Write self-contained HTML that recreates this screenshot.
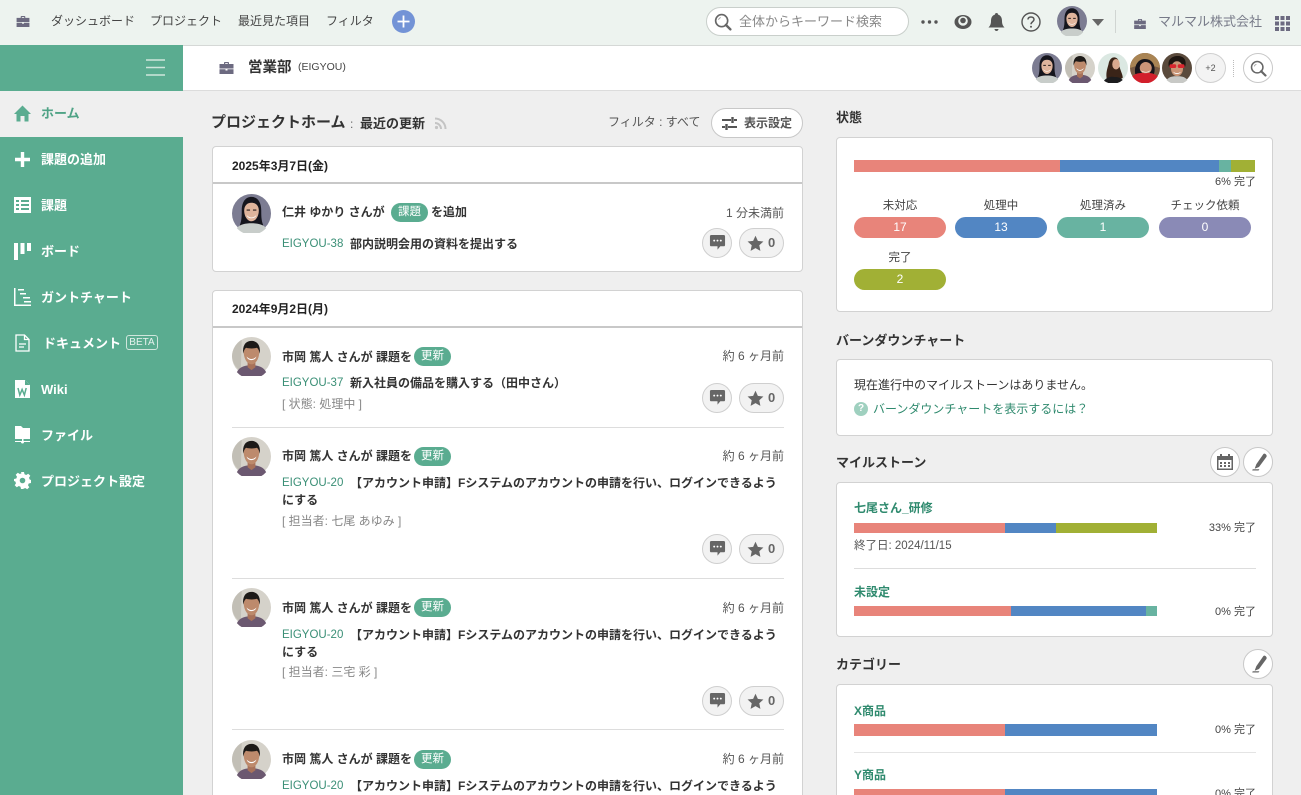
<!DOCTYPE html>
<html lang="ja"><head><meta charset="utf-8"><title>営業部</title>
<style>
html,body{margin:0;padding:0;width:1301px;height:795px;overflow:hidden}
body{background:#efefef;font-family:"Liberation Sans","Noto Sans CJK JP",sans-serif;color:#333;font-size:12px}
#root{position:relative;width:1301px;height:795px;overflow:hidden;background:#efefef}
.t{position:absolute;white-space:nowrap;line-height:20px;height:20px}
.r{position:absolute}
.b{font-weight:bold}
svg{position:absolute;overflow:visible}
.n{color:#fff;font-weight:bold;font-size:13px;left:41px}
.panel{position:absolute;background:#fff;border:1px solid #d2d2d2;border-radius:4px;box-sizing:border-box}
.pill{position:absolute;height:21px;line-height:21px;border-radius:11px;width:92px;color:#fff;text-align:center;font-size:12px}
.lab{position:absolute;width:92px;text-align:center;line-height:20px;font-size:11.5px;white-space:nowrap;color:#444}
.seg{position:absolute}
.tag{position:absolute;background:#5aac90;color:#fff;border-radius:10px;height:19px;line-height:19px;width:37px;text-align:center;font-size:11.5px}
.id{color:#3a8f76;font-size:11.5px}
.grey{color:#888}
.rbtn{position:absolute;background:#f2f2f2;border:1px solid #cfcfcf;border-radius:15px;box-sizing:border-box;height:30px}
.cbtn{position:absolute;background:#fff;border:1px solid #c8c8c8;border-radius:50%;width:30px;height:30px;box-sizing:border-box}
.hd{font-size:13px;font-weight:bold;color:#333}
.ms{color:#2f8a6e;font-weight:bold;font-size:12px}
.pc{font-size:11px;color:#444}
</style></head><body><div id="root">
<svg width="0" height="0" style="position:absolute">
<defs>
<symbol id="a1" viewBox="0 0 40 40"><circle cx="20" cy="20" r="20" fill="#7c7c92"/><path d="M8 32c2-5 2-10 2-15C10 8 14 3 20 3s10 5 10 14c0 5 0 10 2 15l-6 3H14z" fill="#15151d"/><path d="M12.500 17c0-5 3-8 7.500-8s7.500 3 7.500 8c0 6-3.500 11-7.500 11s-7.500-5-7.500-11z" fill="#dfb49c"/><path d="M15 21.500c3 3.500 7 3.500 10 0-1 4.500-9 4.500-10 0z" fill="#fff"/><path d="M15 16.500h3.500M21.500 16.500H25" stroke="#2a1f1c" stroke-width="1.200"/><path d="M5 35c3-4 9-5 15-5s12 1 15 5a20 20 0 0 1-30 0z" fill="#c8cdca"/></symbol>
<symbol id="a2" viewBox="0 0 40 40"><circle cx="20" cy="20" r="20" fill="#d5d2ca"/><path d="M0 20a20 20 0 0 1 10-17l-1 32A20 20 0 0 1 0 20z" fill="#c2bfb6"/><path d="M5 36c3-6 9-7 15-7s12 1 15 7a20 20 0 0 1-30 0z" fill="#6b5870"/><path d="M16 26h8v5l-4 3-4-3z" fill="#a8725a"/><path d="M12 15c0-5 3-8 8-8s8 3 8 8c0 7-3.500 13-8 13s-8-6-8-13z" fill="#bd8a6c"/><path d="M11.500 17c-1-9 3-13 8.500-13s9.500 4 8.500 13c-.6-3-1.500-5-3-6-3.500 1-7.500 1-11 0-1.500 1-2.400 3-3 6z" fill="#1d1a18"/><path d="M15 20c3 3.500 7 3.500 10 0-1 5-9 5-10 0z" fill="#fff"/></symbol>
<symbol id="a3" viewBox="0 0 40 40"><circle cx="20" cy="20" r="20" fill="#dbe8e2"/><path d="M12 36c-2-8 0-14 2-21 1-7 5-10 9-9 4 1 5 5 5 9 1 7 5 13 5 18l-9 6z" fill="#3a2418"/><ellipse cx="24" cy="15" rx="5" ry="7" fill="#d9a98e"/><path d="M8 37c4-5 10-6 14-5 5 0 8 1 11 4a20 20 0 0 1-25 1z" fill="#1c1c1e"/></symbol>
<symbol id="a4" viewBox="0 0 40 40"><circle cx="20" cy="20" r="20" fill="#7a5c44"/><path d="M0 20a20 20 0 0 1 40 0l-6-2H6z" fill="#a98454"/><path d="M7 28C5 18 10 8 20 8s15 9 12 20z" fill="#17141a"/><ellipse cx="21" cy="20" rx="8" ry="8" fill="#cc9478"/><path d="M15 23c3 3 9 3 12 0-1 4-11 4-12 0z" fill="#fff"/><path d="M3 31c5-4 10-5 17-4 7-1 12 0 17 4a20 20 0 0 1-34 0z" fill="#d21f2b"/></symbol>
<symbol id="a5" viewBox="0 0 40 40"><circle cx="20" cy="20" r="20" fill="#5a4a3c"/><path d="M9 18c-2-9 4-14 12-14s12 5 10 14z" fill="#1e1611"/><ellipse cx="20" cy="21" rx="8" ry="10" fill="#c99576"/><rect x="10" y="15" width="9" height="5" rx="2" fill="#d8262e"/><rect x="21" y="15" width="9" height="5" rx="2" fill="#d8262e"/><path d="M15 25c3 2.500 7 2.500 10 0-1 4-9 4-10 0z" fill="#fff"/><path d="M6 36c4-5 9-5 14-5s10 0 14 5a20 20 0 0 1-28 0z" fill="#c8c9c6"/></symbol>
<symbol id="case" viewBox="0 0 14 12"><path d="M4.500 2V.8C4.500.4 4.900 0 5.300 0h3.400c.4 0 .8.400.8.800V2H14v4.500H0V2zM5.700 1.100V2h2.600v-.9zM0 7.300h6v1.200h2V7.300h6V12H0z" fill="currentColor"/></symbol>
<symbol id="cmt" viewBox="0 0 18 18"><path d="M2.500 1h13A1.500 1.500 0 0 1 17 2.500v9a1.500 1.500 0 0 1-1.500 1.500H12l-3 3.500V13H2.500A1.500 1.500 0 0 1 1 11.500v-9A1.500 1.500 0 0 1 2.500 1z" fill="#666"/><circle cx="5.500" cy="7" r="1" fill="#fff"/><circle cx="9" cy="7" r="1" fill="#fff"/><circle cx="12.500" cy="7" r="1" fill="#fff"/></symbol>
<symbol id="star" viewBox="0 0 18 18"><path d="M9 .8l2.500 5.400 5.900.7-4.400 4 1.200 5.900L9 13.900l-5.200 2.900L5 10.900l-4.400-4 5.900-.7z" fill="#666"/></symbol>
<symbol id="pen" viewBox="0 0 20 20"><path d="M15 1c1-.6 2-.2 2.800.6.800.8 1 1.900.4 2.800L10 15.500l-4.500 1.800-.2-.2L7 12.500zM3 18h7.500l-1 1.500H2.500z" fill="#666"/></symbol>
<symbol id="mag" viewBox="0 0 20 20"><circle cx="8.500" cy="8.500" r="6.700" fill="none" stroke="#666" stroke-width="1.800"/><path d="M13.200 13.200l5 5" stroke="#666" stroke-width="2.600" stroke-linecap="round"/><path d="M5 7.500A4 4 0 0 1 7.500 5" fill="none" stroke="#999" stroke-width="1"/></symbol>
</defs></svg>

<!-- top bar -->
<div class="r" style="left:0;top:0;width:1301px;height:45px;background:#edf3ef;border-bottom:1px solid #d5d8d6"></div>
<svg style="left:16px;top:16px;color:#6c6a80" width="14" height="11"><use href="#case" width="14" height="11"/></svg>
<div class="t" style="left:51px;top:11px;color:#444">ダッシュボード</div>
<div class="t" style="left:150px;top:11px;color:#444">プロジェクト</div>
<div class="t" style="left:238px;top:11px;color:#444">最近見た項目</div>
<div class="t" style="left:326px;top:11px;color:#444">フィルタ</div>
<div class="r" style="left:392px;top:10px;width:23px;height:23px;border-radius:50%;background:#7393d6"></div>
<svg style="left:392px;top:10px" width="23" height="23"><path d="M11.500 5.500v12M5.500 11.500h12" stroke="#fff" stroke-width="1.800"/></svg>
<div class="r" style="left:706px;top:7px;width:203px;height:29px;background:#fff;border:1px solid #c9cfcb;border-radius:15px;box-sizing:border-box"></div>
<svg style="left:714px;top:13px" width="18" height="18"><use href="#mag" width="18" height="18"/></svg>
<div class="t" style="left:739px;top:12px;color:#888;font-size:13px">全体からキーワード検索</div>
<svg style="left:920px;top:19px" width="20" height="6"><circle cx="3" cy="3" r="1.700" fill="#555"/><circle cx="9.500" cy="3" r="1.700" fill="#555"/><circle cx="16" cy="3" r="1.700" fill="#555"/></svg>
<svg style="left:954px;top:14px" width="18" height="16"><ellipse cx="9" cy="8" rx="8.500" ry="7" fill="#555"/><circle cx="9" cy="7" r="4.800" fill="#edf3ef"/><circle cx="9" cy="6.500" r="2.800" fill="#555"/></svg>
<svg style="left:988px;top:12px" width="17" height="20"><path d="M8.500 1c1 0 1.500.6 1.500 1.500C13 3.500 14 6 14 9c0 3 1 5 2.500 6.500H.5C2 14 3 12 3 9c0-3 1-5.500 4-6.500C7 1.600 7.500 1 8.500 1zM6.500 17h4c0 1-.9 2-2 2s-2-1-2-2z" fill="#555"/></svg>
<svg style="left:1021px;top:12px" width="20" height="20"><circle cx="10" cy="10" r="9" fill="none" stroke="#555" stroke-width="1.400"/><path d="M7 7.500C7 5.800 8.300 5 10 5s3 .9 3 2.500c0 2.300-3 2.300-3 4.700" fill="none" stroke="#555" stroke-width="1.500"/><circle cx="10" cy="14.700" r="1" fill="#555"/></svg>
<svg style="left:1057px;top:6px" width="30" height="30"><use href="#a1" width="30" height="30"/></svg>
<svg style="left:1092px;top:19px" width="12" height="7"><path d="M0 0h12L6 7z" fill="#666"/></svg>
<div class="r" style="left:1115px;top:10px;width:1px;height:23px;background:#d0d5d2"></div>
<svg style="left:1134px;top:19px;color:#6c6a80" width="12" height="10"><use href="#case" width="12" height="10"/></svg>
<div class="t" style="left:1158px;top:12px;color:#777a88;font-size:13px">マルマル株式会社</div>
<svg style="left:1275px;top:16px" width="15" height="15" fill="#6c6a80"><rect width="4" height="4"/><rect x="5.500" width="4" height="4"/><rect x="11" width="4" height="4"/><rect y="5.500" width="4" height="4"/><rect x="5.500" y="5.500" width="4" height="4"/><rect x="11" y="5.500" width="4" height="4"/><rect y="11" width="4" height="4"/><rect x="5.500" y="11" width="4" height="4"/><rect x="11" y="11" width="4" height="4"/></svg>

<!-- subheader -->
<div class="r" style="left:183px;top:46px;width:1118px;height:44px;background:#fff;border-bottom:1px solid #dcdcdc"></div>
<svg style="left:219px;top:62px;color:#6c6a80" width="15" height="12"><use href="#case" width="15" height="12"/></svg>
<div class="t b" style="left:248px;top:58px;font-size:14.500px">営業部</div>
<div class="t" style="left:298px;top:57px;font-size:10.500px;color:#444">(EIGYOU)</div>
<svg style="left:1032px;top:53px" width="30" height="30"><use href="#a1" width="30" height="30"/></svg>
<svg style="left:1065px;top:53px" width="30" height="30"><use href="#a2" width="30" height="30"/></svg>
<svg style="left:1098px;top:53px" width="30" height="30"><use href="#a3" width="30" height="30"/></svg>
<svg style="left:1130px;top:53px" width="30" height="30"><use href="#a4" width="30" height="30"/></svg>
<svg style="left:1162px;top:53px" width="30" height="30"><use href="#a5" width="30" height="30"/></svg>
<div class="r" style="left:1195px;top:53px;width:31px;height:30px;background:#f3f3f3;border:1px solid #d0d0d0;border-radius:50%;box-sizing:border-box;text-align:center;line-height:28px;font-size:9px;color:#555">+2</div>
<div class="r" style="left:1233px;top:60px;width:0;height:17px;border-left:1px dotted #bbb"></div>
<div class="cbtn" style="left:1243px;top:53px"></div>
<svg style="left:1250px;top:60px" width="17" height="17"><use href="#mag" width="17" height="17"/></svg>

<!-- sidebar -->
<div class="r" style="left:0;top:45px;width:183px;height:750px;background:#5aac90"></div>
<div class="r" style="left:0;top:91px;width:183px;height:46px;background:#efefef"></div>
<svg style="left:146px;top:59px" width="19" height="17"><path d="M0 1h19M0 8.500h19M0 16h19" stroke="#cfe6dc" stroke-width="1.600"/></svg>

<svg style="left:14px;top:105px" width="17" height="17"><path d="M8.500 0.500L17 9h-2.500v7.500H10.500V11h-4v5.500H2.500V9H0z" fill="#5aac90"/></svg>
<div class="t n" style="top:104px;color:#4fa386">ホーム</div>

<svg style="left:14px;top:151px" width="17" height="17"><path d="M8.500 1v15M1 8.500h15" stroke="#fff" stroke-width="3.400"/></svg>
<div class="t n" style="top:150px">課題の追加</div>

<svg style="left:14px;top:197px" width="17" height="16"><path d="M0 0h17v16H0z" fill="#fff"/><path d="M2 3h3v2H2zM7 3h8v2H7zM2 7h3v2H2zM7 7h8v2H7zM2 11h3v2H2zM7 11h8v2H7z" fill="#5aac90"/></svg>
<div class="t n" style="top:196px">課題</div>

<svg style="left:14px;top:243px" width="17" height="17" fill="#fff"><rect width="4" height="17"/><rect x="6.500" width="4" height="11"/><rect x="13" width="4" height="8"/></svg>
<div class="t n" style="top:242px">ボード</div>

<svg style="left:14px;top:288px" width="17" height="18" fill="#fff"><path d="M0 0h1.500v16.500H17V18H0z"/><rect x="4" y="1" width="6" height="1.500"/><rect x="6" y="5" width="6" height="1.500"/><rect x="9" y="9" width="7" height="1.500"/><rect x="10" y="13" width="7" height="1.500"/></svg>
<div class="t n" style="top:288px">ガントチャート</div>

<svg style="left:15px;top:334px" width="15" height="18"><path d="M1 1h8.500L14 5.500V17H1z" fill="none" stroke="#fff" stroke-width="1.300"/><path d="M9.500 1v4.500H14M4 10h7M4 13h5" fill="none" stroke="#fff" stroke-width="1.300"/></svg>
<div class="t n" style="top:334px;left:43px">ドキュメント</div>
<div class="r" style="left:126px;top:335px;width:32px;height:15px;border:1px solid #cfe6dc;border-radius:3px;box-sizing:border-box;color:#e6f3ee;font-size:10px;line-height:13px;text-align:center">BETA</div>

<svg style="left:15px;top:380px" width="15" height="18"><path d="M0 0h10l5 5v13H0z" fill="#fff"/><path d="M10 0v5h5" fill="#5aac90"/><path d="M3 8l1.800 7 2.300-5.500 2.300 5.500L11.200 8" fill="none" stroke="#5aac90" stroke-width="1.500"/></svg>
<div class="t n" style="top:380px">Wiki</div>

<svg style="left:15px;top:426px" width="15" height="18" fill="#fff"><path d="M0 0h6l2 2h7v11H0z"/><path d="M7 13h1.500v2H15v1H9a1.500 1.500 0 0 1-3 0H0v-1h7z"/></svg>
<div class="t n" style="top:426px">ファイル</div>

<svg style="left:14px;top:472px" width="17" height="17"><path d="M7 0h3l.5 2.300 1.700.7 2-1.300 2.100 2.100-1.300 2 .7 1.700L17 8v3l-2.300.5-.7 1.700 1.300 2-2.100 2.100-2-1.300-1.700.7L9 17H7l-.5-2.300-1.700-.7-2 1.300L.7 13.200l1.300-2-.7-1.700L0 9V7l2.300-.5.700-1.700-1.300-2L3.800.7l2 1.300 1.700-.7z" fill="#fff"/><circle cx="8.500" cy="8.500" r="2.800" fill="#5aac90"/></svg>
<div class="t n" style="top:472px">プロジェクト設定</div>

<!-- main header -->
<div class="t b" style="left:211px;top:113px;font-size:15px">プロジェクトホーム</div>
<div class="t" style="left:350px;top:114px;color:#666">:</div>
<div class="t b" style="left:360px;top:114px;font-size:13px">最近の更新</div>
<svg style="left:434px;top:117px" width="13" height="13"><path d="M1 1.500A10.500 10.500 0 0 1 11.500 12M1 6a6 6 0 0 1 6 6" fill="none" stroke="#c4c4c4" stroke-width="2"/><circle cx="2.500" cy="10.500" r="1.600" fill="#c4c4c4"/></svg>
<div class="t" style="left:608px;top:112px;color:#555">フィルタ : すべて</div>
<div class="r" style="left:711px;top:108px;width:92px;height:30px;background:#fff;border:1px solid #c8c8c8;border-radius:15px;box-sizing:border-box"></div>
<svg style="left:722px;top:116px" width="15" height="15"><path d="M0 4h9M12 4h3M0 11h3M6 11h9" stroke="#555" stroke-width="2"/><path d="M10.500 1v6M4.500 8v6" stroke="#555" stroke-width="2.400"/></svg>
<div class="t b" style="left:744px;top:113px;font-size:12px;color:#555">表示設定</div>

<!-- card 1 -->
<div class="panel" style="left:212px;top:146px;width:591px;height:126px"></div>
<div class="r" style="left:213px;top:182px;width:589px;height:2px;background:#c8c8c8"></div>
<div class="t b" style="left:232px;top:156px;font-size:12px;color:#222">2025年3月7日(金)</div>
<svg style="left:232px;top:194px" width="39" height="39"><use href="#a1" width="39" height="39"/></svg>
<div class="t b" style="left:282px;top:202px">仁井 ゆかり さんが</div>
<div class="tag" style="left:391px;top:203px">課題</div>
<div class="t b" style="left:431px;top:202px">を追加</div>
<div class="t" style="right:517px;top:203px;color:#555">1 分未満前</div>
<div class="t id" style="left:282px;top:234px">EIGYOU-38</div>
<div class="t b" style="left:350px;top:234px">部内説明会用の資料を提出する</div>
<div class="rbtn" style="left:702px;top:228px;width:30px"></div><svg style="left:709px;top:234px" width="17" height="17"><use href="#cmt" width="17" height="17"/></svg>
<div class="rbtn" style="left:739px;top:228px;width:45px"></div><svg style="left:747px;top:235px" width="17" height="17"><use href="#star" width="17" height="17"/></svg><div class="t b" style="left:768px;top:233px;color:#666;font-size:13px">0</div>

<!-- card 2 -->
<div class="panel" style="left:212px;top:290px;width:591px;height:520px"></div>
<div class="r" style="left:213px;top:326px;width:589px;height:2px;background:#c8c8c8"></div>
<div class="t b" style="left:232px;top:299px;font-size:12px;color:#222">2024年9月2日(月)</div>

<svg style="left:232px;top:337px" width="39" height="39"><use href="#a2" width="39" height="39"/></svg>
<div class="t b" style="left:282px;top:347px">市岡 篤人 さんが 課題を</div>
<div class="tag" style="left:414px;top:347px">更新</div>
<div class="t" style="right:517px;top:346px;color:#555">約 6 ヶ月前</div>
<div class="t id" style="left:282px;top:373px">EIGYOU-37</div>
<div class="t b" style="left:350px;top:373px">新入社員の備品を購入する（田中さん）</div>
<div class="t grey" style="left:282px;top:394px">[ 状態: 処理中 ]</div>
<div class="rbtn" style="left:702px;top:383px;width:30px"></div><svg style="left:709px;top:389px" width="17" height="17"><use href="#cmt" width="17" height="17"/></svg>
<div class="rbtn" style="left:739px;top:383px;width:45px"></div><svg style="left:747px;top:390px" width="17" height="17"><use href="#star" width="17" height="17"/></svg><div class="t b" style="left:768px;top:388px;color:#666;font-size:13px">0</div>
<div class="r" style="left:232px;top:427px;width:552px;height:1px;background:#ddd"></div>

<svg style="left:232px;top:437px" width="39" height="39"><use href="#a2" width="39" height="39"/></svg>
<div class="t b" style="left:282px;top:446px">市岡 篤人 さんが 課題を</div>
<div class="tag" style="left:414px;top:447px">更新</div>
<div class="t" style="right:517px;top:446px;color:#555">約 6 ヶ月前</div>
<div class="t id" style="left:282px;top:473px">EIGYOU-20</div>
<div class="t b" style="left:350px;top:473px">【アカウント申請】Fシステムのアカウントの申請を行い、ログインできるよう</div>
<div class="t b" style="left:282px;top:490px">にする</div>
<div class="t grey" style="left:282px;top:511px">[ 担当者: 七尾 あゆみ ]</div>
<div class="rbtn" style="left:702px;top:534px;width:30px"></div><svg style="left:709px;top:540px" width="17" height="17"><use href="#cmt" width="17" height="17"/></svg>
<div class="rbtn" style="left:739px;top:534px;width:45px"></div><svg style="left:747px;top:541px" width="17" height="17"><use href="#star" width="17" height="17"/></svg><div class="t b" style="left:768px;top:539px;color:#666;font-size:13px">0</div>
<div class="r" style="left:232px;top:578px;width:552px;height:1px;background:#ddd"></div>

<svg style="left:232px;top:588px" width="39" height="39"><use href="#a2" width="39" height="39"/></svg>
<div class="t b" style="left:282px;top:598px">市岡 篤人 さんが 課題を</div>
<div class="tag" style="left:414px;top:598px">更新</div>
<div class="t" style="right:517px;top:598px;color:#555">約 6 ヶ月前</div>
<div class="t id" style="left:282px;top:625px">EIGYOU-20</div>
<div class="t b" style="left:350px;top:625px">【アカウント申請】Fシステムのアカウントの申請を行い、ログインできるよう</div>
<div class="t b" style="left:282px;top:642px">にする</div>
<div class="t grey" style="left:282px;top:662px">[ 担当者: 三宅 彩 ]</div>
<div class="rbtn" style="left:702px;top:686px;width:30px"></div><svg style="left:709px;top:692px" width="17" height="17"><use href="#cmt" width="17" height="17"/></svg>
<div class="rbtn" style="left:739px;top:686px;width:45px"></div><svg style="left:747px;top:693px" width="17" height="17"><use href="#star" width="17" height="17"/></svg><div class="t b" style="left:768px;top:691px;color:#666;font-size:13px">0</div>
<div class="r" style="left:232px;top:729px;width:552px;height:1px;background:#ddd"></div>

<svg style="left:232px;top:740px" width="39" height="39"><use href="#a2" width="39" height="39"/></svg>
<div class="t b" style="left:282px;top:749px">市岡 篤人 さんが 課題を</div>
<div class="tag" style="left:414px;top:750px">更新</div>
<div class="t" style="right:517px;top:749px;color:#555">約 6 ヶ月前</div>
<div class="t id" style="left:282px;top:776px">EIGYOU-20</div>
<div class="t b" style="left:350px;top:776px">【アカウント申請】Fシステムのアカウントの申請を行い、ログインできるよう</div>

<!-- right: status -->
<div class="t hd" style="left:836px;top:108px">状態</div>
<div class="panel" style="left:836px;top:137px;width:437px;height:175px"></div>
<div class="seg" style="left:854px;top:160px;width:206px;height:12px;background:#e8847a"></div>
<div class="seg" style="left:1060px;top:160px;width:159px;height:12px;background:#5286c3"></div>
<div class="seg" style="left:1219px;top:160px;width:12px;height:12px;background:#68b3a1"></div>
<div class="seg" style="left:1231px;top:160px;width:24px;height:12px;background:#a1b035"></div>
<div class="t pc" style="right:45px;top:172px">6% 完了</div>
<div class="lab" style="left:854px;top:196px">未対応</div><div class="pill" style="left:854px;top:217px;background:#e8847a">17</div>
<div class="lab" style="left:955px;top:196px">処理中</div><div class="pill" style="left:955px;top:217px;background:#5286c3">13</div>
<div class="lab" style="left:1057px;top:196px">処理済み</div><div class="pill" style="left:1057px;top:217px;background:#68b3a1">1</div>
<div class="lab" style="left:1159px;top:196px">チェック依頼</div><div class="pill" style="left:1159px;top:217px;background:#8a8ab6">0</div>
<div class="lab" style="left:854px;top:248px">完了</div><div class="pill" style="left:854px;top:269px;background:#a1b035">2</div>

<!-- burndown -->
<div class="t hd" style="left:836px;top:331px">バーンダウンチャート</div>
<div class="panel" style="left:836px;top:359px;width:437px;height:77px"></div>
<div class="t" style="left:854px;top:375px;color:#333">現在進行中のマイルストーンはありません。</div>
<div class="r" style="left:854px;top:402px;width:14px;height:14px;border-radius:50%;background:#9fd0bf;color:#fff;font-size:10px;line-height:14px;text-align:center;font-weight:bold">?</div>
<div class="t" style="left:873px;top:399px;color:#2f8a6e">バーンダウンチャートを表示するには？</div>

<!-- milestones -->
<div class="t hd" style="left:836px;top:453px">マイルストーン</div>
<div class="cbtn" style="left:1210px;top:447px"></div>
<svg style="left:1217px;top:454px" width="16" height="16"><path d="M0 2h3V0h2v2h6V0h2v2h3v14H0z" fill="#666"/><rect x="1.500" y="6" width="13" height="8.500" fill="#fff"/><path d="M3 8h2v2H3zM7 8h2v2H7zM11 8h2v2h-2zM3 11h2v2H3zM7 11h2v2H7zM11 11h2v2h-2z" fill="#666"/></svg>
<div class="cbtn" style="left:1243px;top:447px"></div>
<svg style="left:1250px;top:453px" width="18" height="18"><use href="#pen" width="18" height="18"/></svg>
<div class="panel" style="left:836px;top:482px;width:437px;height:155px"></div>
<div class="t ms" style="left:854px;top:498px">七尾さん_研修</div>
<div class="seg" style="left:854px;top:523px;width:151px;height:10px;background:#e8847a"></div>
<div class="seg" style="left:1005px;top:523px;width:51px;height:10px;background:#5286c3"></div>
<div class="seg" style="left:1056px;top:523px;width:101px;height:10px;background:#a1b035"></div>
<div class="t pc" style="right:45px;top:518px">33% 完了</div>
<div class="t" style="left:854px;top:536px;font-size:11.500px;color:#555">終了日: 2024/11/15</div>
<div class="r" style="left:854px;top:568px;width:402px;height:1px;background:#ddd"></div>
<div class="t ms" style="left:854px;top:582px">未設定</div>
<div class="seg" style="left:854px;top:606px;width:157px;height:10px;background:#e8847a"></div>
<div class="seg" style="left:1011px;top:606px;width:135px;height:10px;background:#5286c3"></div>
<div class="seg" style="left:1146px;top:606px;width:11px;height:10px;background:#68b3a1"></div>
<div class="t pc" style="right:45px;top:602px">0% 完了</div>

<!-- category -->
<div class="t hd" style="left:836px;top:655px">カテゴリー</div>
<div class="cbtn" style="left:1243px;top:649px"></div>
<svg style="left:1250px;top:655px" width="18" height="18"><use href="#pen" width="18" height="18"/></svg>
<div class="panel" style="left:836px;top:684px;width:437px;height:130px"></div>
<div class="t ms" style="left:854px;top:701px">X商品</div>
<div class="seg" style="left:854px;top:724px;width:151px;height:12px;background:#e8847a"></div>
<div class="seg" style="left:1005px;top:724px;width:152px;height:12px;background:#5286c3"></div>
<div class="t pc" style="right:45px;top:720px">0% 完了</div>
<div class="r" style="left:854px;top:752px;width:402px;height:1px;background:#e4e4e4"></div>
<div class="t ms" style="left:854px;top:765px">Y商品</div>
<div class="seg" style="left:854px;top:789px;width:151px;height:12px;background:#e8847a"></div>
<div class="seg" style="left:1005px;top:789px;width:152px;height:12px;background:#5286c3"></div>
<div class="t pc" style="right:45px;top:784px">0% 完了</div>
</div></body></html>
